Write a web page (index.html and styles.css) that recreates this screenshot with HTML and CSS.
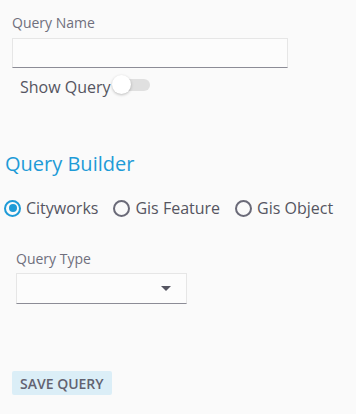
FILE: index.html
```html
<!DOCTYPE html>
<html>
<head>
    <title>Query Editor</title>
    <meta charset="UTF-8">
    <meta name="viewport" content="width=device-width, initial-scale=1.0">
    <link rel="stylesheet" href="styles.css">
</head>
<body>
    <div class="field name-field">
        <label class="field-label">Query Name</label>
        <div class="text-input"></div>
    </div>

    <div class="toggle-row">
        <span class="toggle-label">Show Query</span>
        <span class="toggle">
            <span class="toggle-track"></span>
            <span class="toggle-knob"></span>
        </span>
    </div>

    <h2 class="section-title">Query Builder</h2>

    <div class="radio-group">
        <label class="radio checked"><span class="radio-circle"></span>Cityworks</label>
        <label class="radio"><span class="radio-circle"></span>Gis Feature</label>
        <label class="radio"><span class="radio-circle"></span>Gis Object</label>
    </div>

    <div class="field type-field">
        <label class="field-label">Query Type</label>
        <div class="select-input">
            <span class="select-arrow"></span>
        </div>
    </div>

    <button class="save-btn">SAVE QUERY</button>
</body>
</html>
```

FILE: styles.css
```css
body {
    margin: 0;
    padding: 0;
    background: #fafafa;
    font-family: "Open Sans", "Noto Sans", sans-serif;
    color: #5f5f6e;
    width: 356px;
    height: 414px;
    overflow: hidden;
}

.field {
    display: flex;
    flex-direction: column;
}

.field-label {
    font-size: 14px;
    line-height: 18px;
    color: #6f6f7d;
}

.name-field {
    padding: 14px 0 0 12px;
}

.name-field .field-label {
    margin-bottom: 6px;
}

.text-input {
    width: 274px;
    height: 28px;
    background: #fcfcfc;
    border: 1px solid #e6e6e6;
    border-bottom: 1px solid #8c8c96;
}

.toggle-row {
    display: flex;
    align-items: center;
    padding: 8px 0 0 20px;
    height: 22px;
}

.toggle-label {
    font-size: 16px;
    color: #555561;
    line-height: 22px;
}

.toggle {
    position: relative;
    width: 38px;
    height: 20px;
    margin-left: 1px;
    margin-top: -4px;
}

.toggle-track {
    position: absolute;
    left: 5px;
    top: 4px;
    width: 33px;
    height: 12px;
    border-radius: 6px;
    background: #e0e0e0;
}

.toggle-knob {
    position: absolute;
    left: 0;
    top: 0;
    width: 19px;
    height: 19px;
    border-radius: 50%;
    background: #fff;
    box-shadow: 0 1px 3px rgba(0,0,0,0.25);
}

.section-title {
    margin: 53px 0 0 5px;
    font-size: 20px;
    font-weight: 400;
    line-height: 26px;
    color: #1e9bd7;
}

.radio-group {
    display: flex;
    padding: 20px 0 0 4px;
    gap: 15px;
}

.radio {
    display: flex;
    align-items: center;
    font-size: 16px;
    color: #555561;
    line-height: 22px;
}

.radio-circle {
    width: 13px;
    height: 13px;
    border: 2.5px solid #6a6a78;
    border-radius: 50%;
    margin-right: 5px;
    position: relative;
}

.radio.checked .radio-circle {
    border-color: #1e9bd7;
}

.radio.checked .radio-circle::after {
    content: "";
    position: absolute;
    left: 2.5px;
    top: 2.5px;
    width: 8px;
    height: 8px;
    border-radius: 50%;
    background: #1e9bd7;
}

.type-field {
    padding: 31px 0 0 16px;
}

.type-field .field-label {
    margin-bottom: 5px;
}

.select-input {
    width: 169px;
    height: 29px;
    background: #fcfcfc;
    border: 1px solid #e6e6e6;
    border-bottom: 1px solid #8c8c96;
    display: flex;
    align-items: center;
    justify-content: flex-end;
}

.select-arrow {
    width: 0;
    height: 0;
    border-left: 5px solid transparent;
    border-right: 5px solid transparent;
    border-top: 5px solid #555561;
    margin-right: 15px;
}

.save-btn {
    display: block;
    margin: 67px 0 0 12px;
    padding: 0 8px;
    height: 24px;
    background: #dbeef7;
    border: none;
    border-radius: 2px;
    font-family: "Open Sans", "Noto Sans", sans-serif;
    font-size: 14px;
    font-weight: 600;
    color: #626270;
}
```
